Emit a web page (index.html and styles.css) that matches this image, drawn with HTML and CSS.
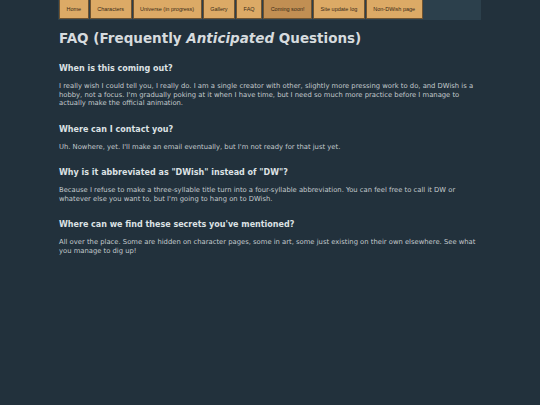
FILE: index.html
```html
<!DOCTYPE html>
<html>
<head>
<meta charset="utf-8">
<link rel="stylesheet" href="styles.css">
</head>
<body>
<div class="page">
  <nav class="nav">
    <a class="tab">Home</a>
    <a class="tab">Characters</a>
    <a class="tab">Universe (in progress)</a>
    <a class="tab">Gallery</a>
    <a class="tab">FAQ</a>
    <a class="tab active">Coming soon!</a>
    <a class="tab">Site update log</a>
    <a class="tab">Non-DWish page</a>
  </nav>
  <main class="content">
    <h1 class="title">FAQ (Frequently <em>Anticipated</em> Questions)</h1>
    <section class="qa">
      <h2 class="q">When is this coming out?</h2>
      <p class="a">I really wish I could tell you, I really do. I am a single creator with other, slightly more pressing work to do, and DWish is a hobby, not a focus. I'm gradually poking at it when I have time, but I need so much more practice before I manage to actually make the official animation.</p>
    </section>
    <section class="qa">
      <h2 class="q">Where can I contact you?</h2>
      <p class="a">Uh. Nowhere, yet. I'll make an email eventually, but I'm not ready for that just yet.</p>
    </section>
    <section class="qa">
      <h2 class="q">Why is it abbreviated as "DWish" instead of "DW"?</h2>
      <p class="a">Because I refuse to make a three-syllable title turn into a four-syllable abbreviation. You can feel free to call it DW or whatever else you want to, but I'm going to hang on to DWish.</p>
    </section>
    <section class="qa">
      <h2 class="q">Where can we find these secrets you've mentioned?</h2>
      <p class="a">All over the place. Some are hidden on character pages, some in art, some just existing on their own elsewhere. See what you manage to dig up!</p>
    </section>
  </main>
</div>
</body>
</html>
```
FILE: styles.css
```css
html, body {
  margin: 0;
  padding: 0;
  background: #22313c;
}
body {
  font-family: "DejaVu Sans", Verdana, sans-serif;
  color: #c3cacd;
}
.page {
  width: 423px;
  margin: 0 0 0 58px;
}
.nav {
  display: flex;
  gap: 1px;
  background: #2c404c;
  height: 20px;
  padding-left: 1px;
}
.tab {
  display: flex;
  align-items: center;
  height: 19px;
  box-sizing: border-box;
  padding: 0 6.5px;
  background: #dcaa66;
  border: 1px solid #6f5330;
  border-top: none;
  font-family: "Liberation Sans", Arial, sans-serif;
  font-size: 5.5px;
  color: #3a2a18;
}
.tab.active {
  background: #c18f53;
}
.content {
  padding: 0 1px;
}
.title {
  margin: 9px 0 0;
  font-size: 13.5px;
  line-height: 18px;
  font-weight: bold;
  color: #d6dbde;
}
.title em {
  font-style: italic;
}
.qa {
  margin-top: 16px;
}
.q {
  margin: 0;
  font-size: 8px;
  line-height: 12px;
  font-weight: bold;
  color: #dde2e4;
}
.a {
  margin: 7px 0 0;
  font-size: 6.8px;
  line-height: 8.5px;
}
```
